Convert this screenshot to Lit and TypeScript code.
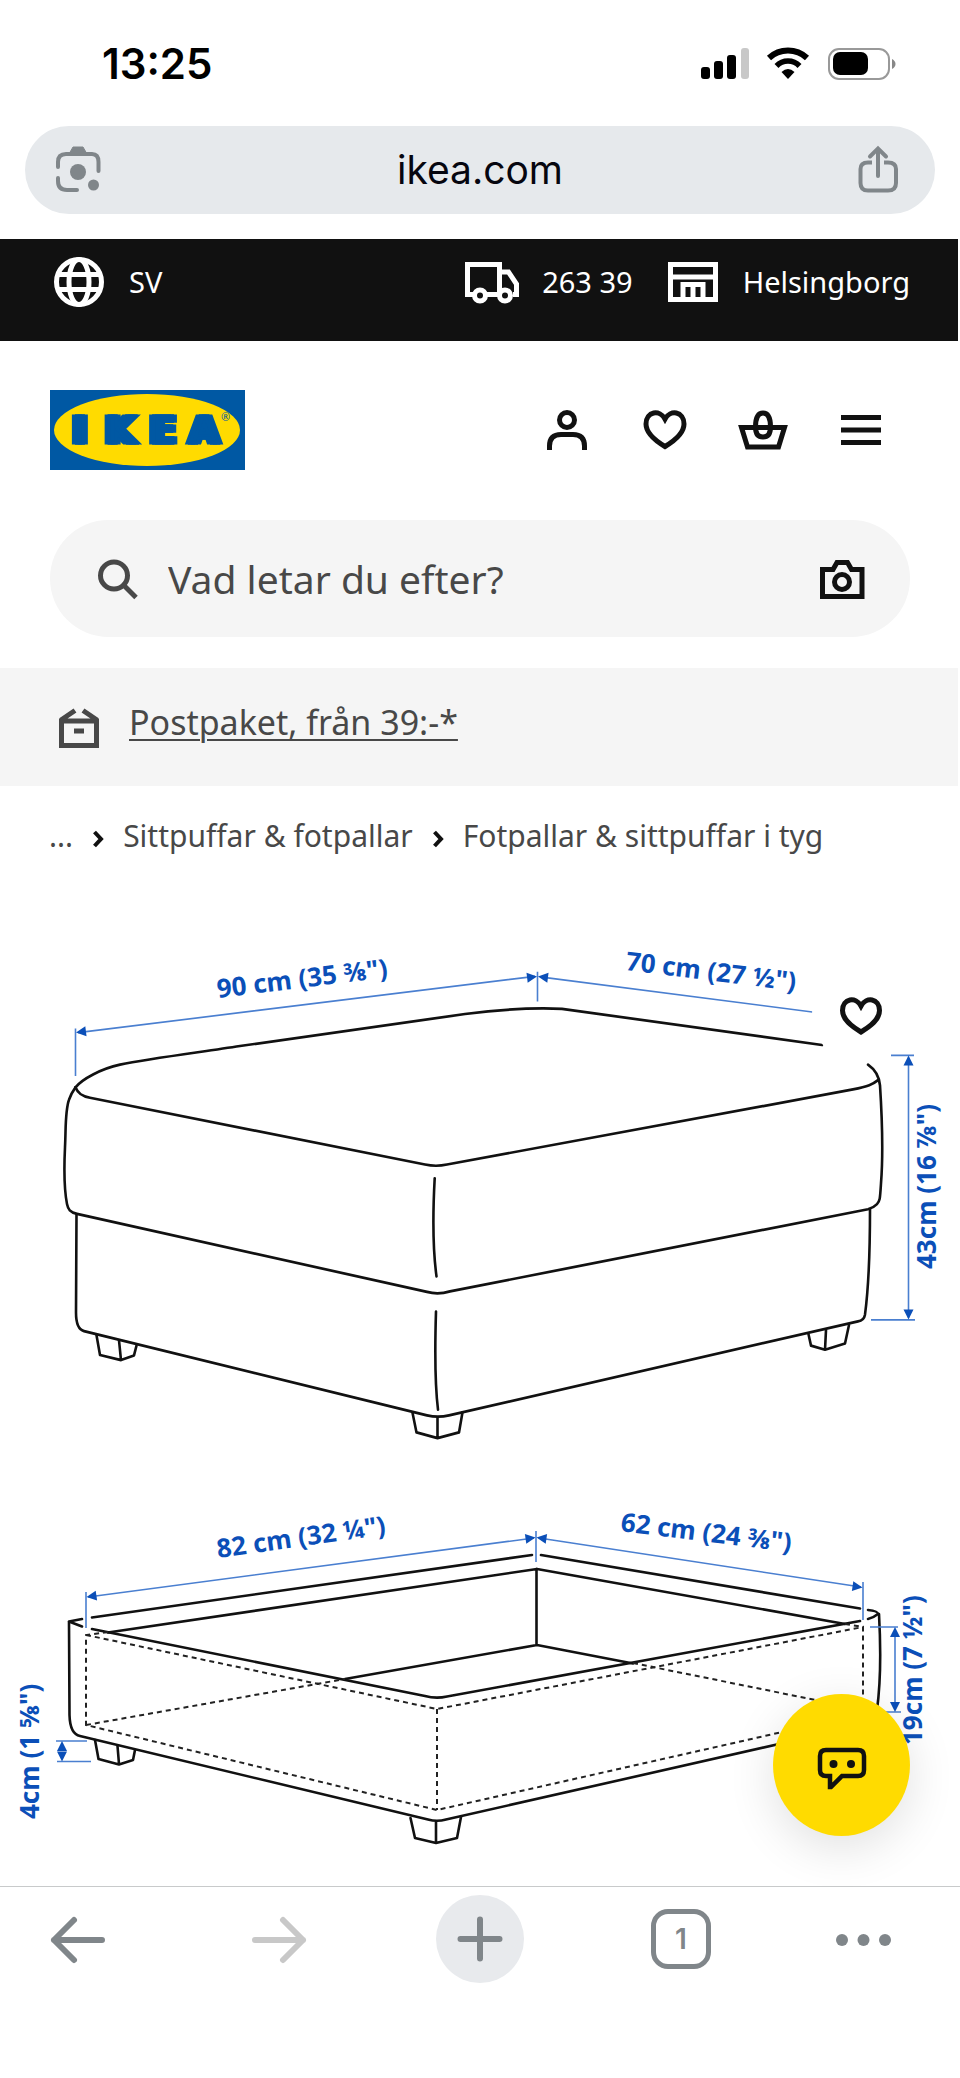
import { LitElement, html, svg, css } from "lit";
import { customElement } from "lit/decorators.js";

const arrow = (x: number, y: number, angle: number) =>
  svg`<path class="head" d="M0 0L-10 -5V5Z" transform="translate(${x} ${y}) rotate(${angle})" />`;

const label = (x: number, y: number, angle: number, text: string) =>
  svg`<text class="dim" transform="translate(${x} ${y}) rotate(${angle})">${text}</text>`;

@customElement("status-bar")
class StatusBar extends LitElement {
  static styles = css`
    :host { display: flex; justify-content: space-between; align-items: center; height: 126px; padding: 2px 64px 0 102px; box-sizing: border-box; }
    .time { font: 600 42px/50px Inter, sans-serif; color: #000; }
    .icons { display: flex; gap: 16px; }
  `;
  render() {
    return html`
      <span class="time">13:25</span>
      <span class="icons">
        <svg width="50" height="34" aria-hidden="true">
          <rect x="1" y="20" width="9" height="12" rx="3" /><rect x="14" y="14" width="9" height="18" rx="3" />
          <rect x="27" y="8" width="9" height="24" rx="3" /><rect x="41" y="1" width="8" height="31" rx="3" fill="#c8c8c8" />
        </svg>
        <svg width="44" height="34" aria-hidden="true">
          <g fill="none" stroke="#000" stroke-width="6"><path d="M3 11A28 28 0 0 1 41 11" /><path d="M10.5 19A16 16 0 0 1 33.5 19" stroke-width="5.5" /></g>
          <path d="M22 32L15.5 25Q22 19 28.5 25Z" />
        </svg>
        <svg width="70" height="34" aria-hidden="true">
          <rect x="3" y="2" width="60" height="30" rx="10" fill="none" stroke="#999" stroke-width="2" />
          <rect x="7" y="5" width="35" height="23" rx="7" /><path d="M66 12Q69.5 14 69.5 17T66 22Z" fill="#888" />
        </svg>
      </span>
    `;
  }
}

@customElement("address-bar")
class AddressBar extends LitElement {
  static styles = css`
    :host { display: flex; align-items: center; justify-content: space-between; margin: 0 25px 25px; padding: 0 28px; height: 88px; border-radius: 44px; background: #e6e9ec; }
    button { display: flex; padding: 0; border: 0; background: none; color: #80868a; }
    .host { font: 400 39px/50px Inter, sans-serif; color: #06060f; }
  `;
  render() {
    return html`
      <button aria-label="Sök med kamera">
        <svg width="50" height="50" fill="none" stroke="currentColor" stroke-width="4" stroke-linecap="round">
          <path d="M5 22V17Q5 9 13 9H39Q45.5 9 45.5 17V26M5 33V36Q5 45 14 45H24" />
          <path d="M16 9L20 2H30L34 9Z" fill="currentColor" stroke-width="1" />
          <circle cx="25" cy="27" r="8" fill="currentColor" stroke="none" /><circle cx="40.5" cy="40" r="5.5" fill="currentColor" stroke="none" />
        </svg>
      </button>
      <span class="host">ikea.com</span>
      <button aria-label="Dela">
        <svg width="50" height="50" viewBox="4 0 50 50" fill="none" stroke="currentColor" stroke-width="4">
          <path d="M19 17.5H15Q7.5 17.5 7.5 24V38Q7.5 45.5 15 45.5H35Q43 45.5 43 38V24Q43 17.5 35 17.5H31" />
          <path d="M25 31V4M17 11.5L25 3.5L33 11.5" stroke-linecap="round" />
        </svg>
      </button>
    `;
  }
}

@customElement("utility-bar")
class UtilityBar extends LitElement {
  static styles = css`
    :host { display: flex; justify-content: space-between; align-items: flex-start; height: 102px; padding: 13px 48px 0 49px; box-sizing: border-box; margin-right: 2px; background: #111; }
    .group { display: flex; gap: 30px; }
    a { display: flex; align-items: center; gap: 20px; color: #fff; text-decoration: none; font: 29px/60px "Noto Sans", sans-serif; }
    svg { flex: none; }
  `;
  render() {
    return html`
      <a href="#language">
        <svg width="60" height="60" fill="none" stroke="#fff" stroke-width="5"><circle cx="30" cy="30" r="22.5" /><ellipse cx="30" cy="30" rx="10" ry="22.5" /><path d="M9 22.5H51M9 37.5H51" /></svg>SV</a>
      <div class="group">
        <a href="#postcode">
          <svg width="60" height="60" fill="none" stroke="#fff" stroke-width="5">
            <path d="M12 42.5H5.5V12.5H37.5V42.5M25 42.5H36M37.5 20H46.5L54.5 32V42.5H51" />
            <circle cx="18" cy="43.5" r="5.5" /><circle cx="43" cy="43.5" r="5.5" />
          </svg>263 39</a>
        <a href="#store">
          <svg width="60" height="60" fill="none" stroke="#fff" stroke-width="5"><path d="M7.5 12.5H52.5V47.5H7.5ZM7.5 25H52.5M20 47V32.5H40V47M30 32V47" /></svg>Helsingborg</a>
      </div>
    `;
  }
}

@customElement("site-header")
class SiteHeader extends LitElement {
  static styles = css`
    :host { display: block; padding: 40px 50px 31px; font-family: "Noto Sans", sans-serif; color: #111; }
    .row { display: flex; justify-content: space-between; align-items: center; }
    .logo { display: flex; }
    .brand { font: 900 37px "DejaVu Sans", sans-serif; fill: #0058a3; stroke: #0058a3; stroke-width: 3px; text-anchor: middle; filter: drop-shadow(3px 0 0 #0058a3) drop-shadow(-3px 0 0 #0058a3); }
    .reg { font: 11px "Noto Sans", sans-serif; fill: #0058a3; }
    nav { display: flex; }
    button { display: flex; justify-content: center; align-items: center; padding: 0; border: 0; background: none; color: #111; }
    nav button { width: 98px; height: 98px; }
    .search { display: flex; align-items: center; gap: 20px; height: 117px; margin-top: 41px; padding: 0 38px; border-radius: 59px; background: #f5f5f5; color: #484848; }
    input { flex: 1; min-width: 0; border: 0; padding: 0; background: none; outline: none; color: #484848; font: 39px/60px "Noto Sans", sans-serif; }
    input::placeholder { color: #484848; opacity: 1; }
  `;
  render() {
    return html`
      <div class="row">
        <a class="logo" href="#home" aria-label="IKEA">
          <svg width="195" height="80">
            <rect width="195" height="80" fill="#0058a3" /><ellipse cx="97" cy="40" rx="93" ry="36" fill="#ffdb00" />
            <text class="brand" y="53" x="30 70 113 154">IKEA</text>
            <text class="reg" x="171" y="31">®</text>
          </svg>
        </a>
        <nav>
          <button aria-label="Logga in"><svg width="60" height="60" fill="none" stroke="currentColor" stroke-width="5"><circle cx="30" cy="20" r="7.5" /><path d="M12.5 50V46Q12.5 34.5 24 34.5H36Q47.5 34.5 47.5 46V50" /></svg></button>
          <button aria-label="Favoriter"><svg width="60" height="60" fill="none" stroke="currentColor" stroke-width="5"><path d="M30 19C25 9.5 11 11 11 24C11 33 20 40.5 30 46.5C40 40.5 49 33 49 24C49 11 35 9.5 30 19Z" /></svg></button>
          <button aria-label="Varukorg"><svg width="60" height="60" fill="none" stroke="currentColor" stroke-width="5"><path d="M8.5 27.5H51.5L45.5 47H14.5Z" /><path d="M30 13C24 13 22.5 20 22.5 27C22.5 34 25 37 30 37S37.5 34 37.5 27C37.5 20 36 13 30 13Z" /></svg></button>
          <button aria-label="Meny"><svg width="60" height="60" stroke="currentColor" stroke-width="5"><path d="M10 17.5H50M10 30H50M10 42.5H50" /></svg></button>
        </nav>
      </div>
      <div class="search">
        <svg width="60" height="60" fill="none" stroke="currentColor" stroke-width="5"><circle cx="26" cy="26.5" r="13.5" /><path d="M35.5 36L48 48.5" /></svg>
        <input type="text" aria-label="Sök" placeholder="Vad letar du efter?" />
        <button aria-label="Bildsökning"><svg width="60" height="60" fill="none" stroke="currentColor" stroke-width="5"><path d="M10.5 20.5H21L25 13.5H35.5L39.5 20.5H50V47.5H10.5Z" /><circle cx="30" cy="33" r="7.5" /></svg></button>
      </div>
    `;
  }
}

@customElement("product-drawing")
class ProductDrawing extends LitElement {
  static styles = css`
    :host { display: block; position: relative; margin-right: 2px; }
    .drawing { display: block; width: 100%; height: auto; }
    .ink { fill: none; stroke: #111; stroke-width: 2.6px; stroke-linejoin: round; stroke-linecap: round; }
    .dash { fill: none; stroke: #222; stroke-width: 2px; stroke-dasharray: 5 4; }
    .rule { fill: none; stroke: #4a7fd0; stroke-width: 1.6px; }
    .head { fill: #0b4fb8; }
    .dim { font: 700 26px "Noto Sans", sans-serif; fill: #0b4fb8; }
    button { display: flex; justify-content: center; align-items: center; padding: 0; border: 0; border-radius: 50%; color: #111; }
    .save { position: absolute; top: 85px; right: 48px; width: 98px; height: 98px; background: #fff; }
    .chat { position: absolute; bottom: 50px; right: 48px; width: 137px; height: 142px; background: #ffdb00; box-shadow: 0 12px 48px rgba(0, 0, 0, 0.12); }
  `;
  render() {
    return html`
      <svg class="drawing" viewBox="0 880 958 1006" role="img" aria-label="Måttritning av fotpallen">
        <g transform="translate(0 -30.45) scale(1 1.0331)">
          <g class="ink">
            <path d="M75.5 1082C82 1074 101 1064 120 1060C150 1054 200 1048 240 1042L465 1011C505 1006 540 1005 562 1006L822 1041" />
            <path d="M868 1060C874 1064 879 1070 880 1080C882 1110 883 1150 881 1175C880 1190 880 1192 877 1195C875 1197 872 1199 868 1200L450 1279.5Q438 1283 427 1280L77 1204.5C70 1203 68 1200 67 1195C64 1180 64 1160 65 1140C66 1120 65 1105 69 1094Q71 1088 75.5 1082" />
            <path d="M75.5 1082C78 1088 82 1090.5 90 1092L425 1156.7Q436 1159 447 1156.7L853 1084C868 1081 873 1079 878 1075" />
            <path d="M434.7 1170C433 1200 433 1240 436.5 1265M436 1299C435 1330 435 1370 438 1394" />
            <path d="M76.5 1205L76 1300Q76 1316 84 1318L427 1399.5Q438 1402 449 1399.5L858 1308.5Q864 1307.5 865 1302C868 1280 870 1240 870 1200" />
            <path d="M96.5 1322L100 1341L121 1346L134 1341.5L136.5 1332M119 1327L121 1346" />
            <path d="M412.5 1397L416.5 1416L437.5 1421.5L459 1416L462.5 1396.5M437.5 1402V1421" />
            <path d="M808.5 1321L811 1332L825 1336L845 1330L849 1312M826 1317L825 1336" />
          </g>
          <g class="rule">
            <path d="M75.5 1025V1071M78 1029L535 974.5M537.5 970V999M540 975L820 1010" />
            <path d="M891 1051H914M871 1307H915M908.5 1053V1305" />
          </g>
        </g>
        <g class="ink">
          <path d="M82 1619L69 1621.5L82 1626.5M92 1617.5L532 1555M541 1555L860 1608.5M868 1610Q878 1611 878 1614Q873 1618 868 1619" />
          <path d="M92 1629L425 1696Q436 1699 447 1696.5L860 1621" />
          <path d="M69 1622L69.5 1715Q70 1734 80 1736L428 1819.5Q437 1822 446 1819.5L790 1741.5M879 1614C881 1650 881 1680 877 1710" />
          <path d="M108 1632.5L537 1569L845 1624M536.5 1569V1645M345 1679L537 1645L633 1663.5" />
          <path d="M95 1740L98.5 1759L119 1764.5L133 1760L135 1750M117.5 1746L119 1764" />
          <path d="M410.5 1818L415 1838L436 1843L457 1838L461 1817M436 1822V1843" />
        </g>
        <path class="dash" d="M108 1632L86 1635V1725L437 1810L800 1728M86 1635L437 1709L863 1627V1720M437 1709V1810M86 1725L345 1679M633 1663L850 1707M845 1624L863 1627" />
        <g class="rule">
          <path d="M86 1592V1628M88 1597L534 1538M536 1531V1562M539 1538L861 1587M863 1582V1620" />
          <path d="M870 1627H898M885 1712H901M895 1629V1710M56 1741H87M57 1761.5H91" />
        </g>
        ${arrow(76, 1032.5, 173)}${arrow(537, 976.5, -7)}${arrow(538, 976.5, 187)}${arrow(908.5, 1055.5, -90)}${arrow(908.5, 1319.5, 90)}
        ${arrow(86.5, 1597, 172)}${arrow(535.5, 1537.5, -8)}${arrow(536.5, 1537.5, 188)}${arrow(862.5, 1587.5, 8)}
        ${arrow(895, 1627, -90)}${arrow(895, 1712, 90)}${arrow(62, 1741, -90)}${arrow(62, 1761.5, 90)}
        ${label(218, 998, -7, '90 cm (35 ⅜")')}${label(625, 970, 7, '70 cm (27 ½")')}${label(936, 1269, -90, '43cm (16 ⅞")')}
        ${label(218, 1558, -8, '82 cm (32 ¼")')}${label(620, 1531, 7, '62 cm (24 ⅜")')}${label(922, 1745, -90, '19cm (7 ½")')}${label(39, 1819, -90, '4cm (1 ⅝")')}
      </svg>
      <button class="save" aria-label="Spara i favoriter"><svg width="60" height="60" fill="none" stroke="currentColor" stroke-width="5"><path d="M30 22C25 12.5 11.5 14 11.5 26.5C11.5 35.5 20 42 30 48C40 42 48.5 35.5 48.5 26.5C48.5 14 35 12.5 30 22Z" /></svg></button>
      <button class="chat" aria-label="Chatta med oss"><svg width="60" height="60" fill="none" stroke="currentColor" stroke-width="4.5"><path d="M18 41H14Q8 41 8 35V21Q8 15 14 15H46Q52 15 52 21V35Q52 41 46 41H30L19 52H18Z" /><g fill="currentColor" stroke="none"><circle cx="21.5" cy="29" r="4" /><circle cx="39" cy="29" r="4" /></g></svg></button>
    `;
  }
}

@customElement("browser-toolbar")
class BrowserToolbar extends LitElement {
  static styles = css`
    :host { display: flex; justify-content: space-between; align-items: flex-start; height: 192px; box-sizing: border-box; padding: 8px 34px 0; border-top: 1px solid #c8cacb; background: #fff; }
    button { display: flex; justify-content: center; align-items: center; width: 88px; height: 88px; padding: 0; border: 0; border-radius: 50%; background: none; color: #80868a; }
    .next { color: #c8c8c8; }
    .new { background: #e8eaed; }
    .tab { box-sizing: border-box; display: flex; justify-content: center; align-items: center; width: 60px; height: 60px; border: 5px solid #80868a; border-radius: 17px; font: 600 28px/30px Inter, sans-serif; }
    .more { justify-content: flex-start; }
    .more svg { overflow: visible; }
  `;
  render() {
    return html`
      <button aria-label="Tillbaka"><svg width="60" height="60" fill="none" stroke="currentColor" stroke-width="6" stroke-linecap="round" stroke-linejoin="round"><path d="M54 31H6M26 11L6 31L26 51" /></svg></button>
      <button class="next" aria-label="Framåt"><svg width="60" height="60" fill="none" stroke="currentColor" stroke-width="6" stroke-linecap="round" stroke-linejoin="round"><path d="M6 31H54M34 11L54 31L34 51" /></svg></button>
      <button class="new" aria-label="Ny flik"><svg width="60" height="60" stroke="currentColor" stroke-width="6" stroke-linecap="round"><path d="M10.5 30H49.5M30 10.5V49.5" /></svg></button>
      <button aria-label="Flikar"><span class="tab">1</span></button>
      <button class="more" aria-label="Mer"><svg width="50" height="60" fill="currentColor"><circle cx="4" cy="31" r="6" /><circle cx="25.5" cy="31" r="6" /><circle cx="47" cy="31" r="6" /></svg></button>
    `;
  }
}

@customElement("app-root")
class AppRoot extends LitElement {
  static styles = css`
    :host { display: block; background: #fff; font-family: "Noto Sans", sans-serif; color: #484848; }
    .promo { display: flex; align-items: center; gap: 20px; height: 118px; box-sizing: border-box; margin-right: 2px; padding: 0 49px; background: #f5f5f5; }
    .promo a { color: #484848; font-size: 34px; line-height: 48px; padding-bottom: 10px; text-decoration-thickness: 2px; text-underline-offset: 4px; }
    .crumbs { display: flex; align-items: center; gap: 10px; height: 94px; box-sizing: border-box; padding: 6px 49px 0; }
    .crumbs a { color: #484848; font-size: 30px; line-height: 44px; text-decoration: none; }
  `;
  render() {
    const chevron = html`<svg width="30" height="30" fill="none" stroke="#111" stroke-width="4" aria-hidden="true"><path d="M11.5 11L18 18L11.5 25" /></svg>`;
    return html`
      <status-bar></status-bar>
      <address-bar></address-bar>
      <utility-bar></utility-bar>
      <site-header></site-header>
      <div class="promo">
        <svg width="60" height="60" fill="none" stroke="#484848" stroke-width="5"><path d="M12.5 24H47.5V48.5H12.5ZM12 23L26 13.5M48 23L34 13.5M25 34H35" /></svg>
        <a href="#shipping">Postpaket, från 39:-*</a>
      </div>
      <nav class="crumbs" aria-label="Brödsmulor">
        <a href="#all">...</a>${chevron}<a href="#footstools">Sittpuffar &amp; fotpallar</a>${chevron}<a href="#fabric">Fotpallar &amp; sittpuffar i tyg</a>
      </nav>
      <product-drawing></product-drawing>
      <browser-toolbar></browser-toolbar>
    `;
  }
}
